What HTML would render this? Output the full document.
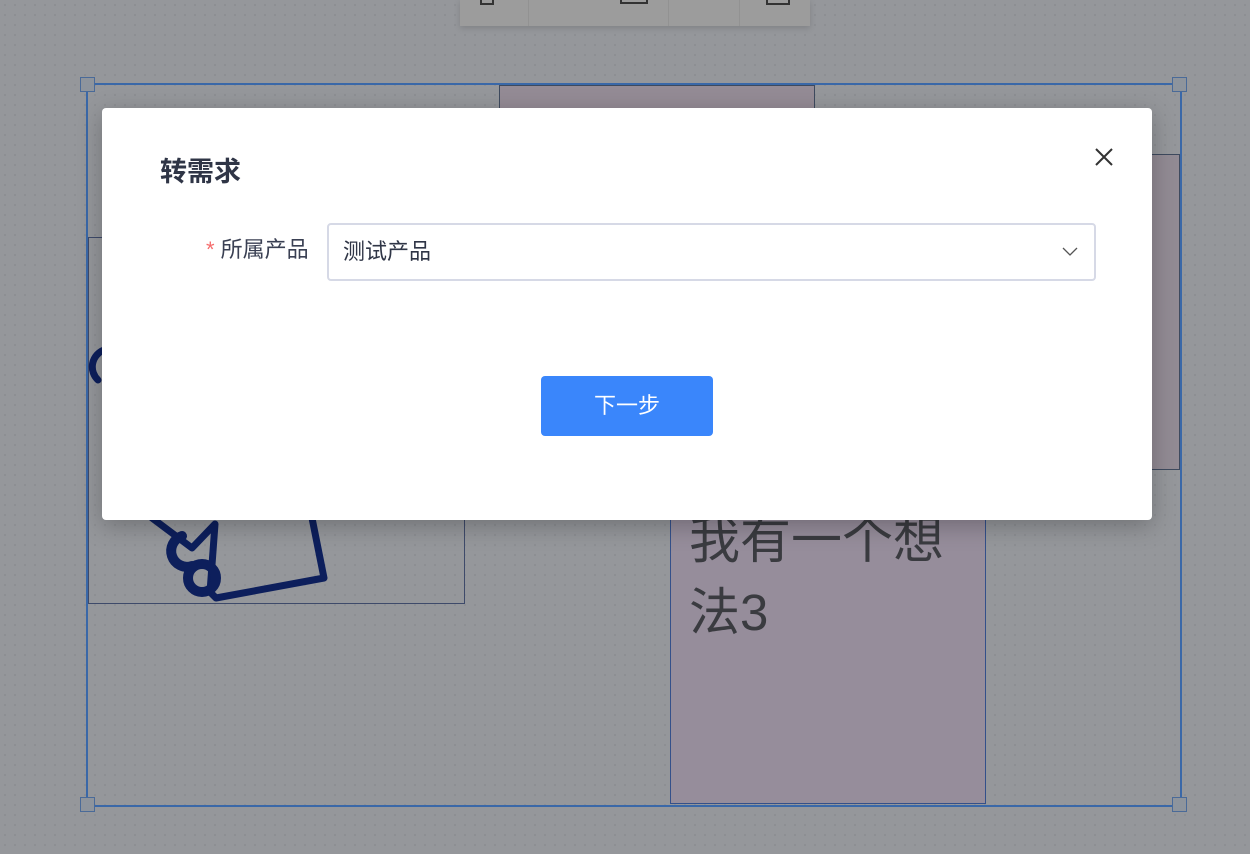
<!DOCTYPE html>
<html><head><meta charset="utf-8"><style>
*{margin:0;padding:0;box-sizing:border-box}
body{width:1250px;height:854px;overflow:hidden;position:relative;background-color:#95979b;background-image:radial-gradient(#8a8c90 0.8px,transparent 1px);background-size:10px 10px;font-family:"Liberation Sans","Noto Sans CJK SC",sans-serif}
.abs{position:absolute}
</style></head><body>
<div class="abs" style="left:460px;top:0;width:350px;height:26px;background:#9c9c9c;box-shadow:0 2px 6px rgba(0,0,0,.15)">
<div class="abs" style="left:68px;top:0;width:1px;height:26px;background:#929292"></div>
<div class="abs" style="left:208px;top:0;width:1px;height:26px;background:#929292"></div>
<div class="abs" style="left:279px;top:0;width:1px;height:26px;background:#929292"></div>
<div class="abs" style="left:20px;top:0;width:14px;height:5px;border:2px solid #333;border-top:none"></div>
<div class="abs" style="left:160px;top:0;width:28px;height:4px;border:2px solid #333;border-top:none"></div>
<div class="abs" style="left:306px;top:0;width:24px;height:5px;border:2px solid #333;border-top:none"></div>
</div>
<div class="abs" style="left:499px;top:85px;width:316px;height:30px;background:#948b95;border:1px solid #3e4a5e"></div>
<div class="abs" style="left:1140px;top:154px;width:40px;height:316px;background:#928b94;border:1px solid #3e4a5e"></div>
<div class="abs" style="left:88px;top:237px;width:377px;height:367px;border:1px solid #3e4a6a"></div>
<svg class="abs" style="left:80px;top:330px" width="400" height="290" viewBox="0 0 400 290">
<g fill="none" stroke="#0d1f5c" stroke-width="7" stroke-linecap="round" stroke-linejoin="round">
<path d="M24 20 A18 18 0 0 0 18 50"/>
<path d="M72 188 L112 218 L135 194 L130 262 L136 268 L244 248 L232 188"/>
<circle cx="122" cy="248" r="14" stroke-width="10"/>
<path d="M102 206 A12 12 0 0 0 112 236" stroke-width="10"/>
</g></svg>
<div class="abs" style="left:670px;top:470px;width:316px;height:334px;background:#968d9b;border:1px solid #34508a;color:#3a3b40;font-size:51px;line-height:72px;padding:34px 0 0 18px">我有一个想<br>法3</div>
<div class="abs" style="left:86px;top:83px;width:1096px;height:724px;border:2px solid #3a68a8"></div>
<div class="abs" style="left:80px;top:77px;width:15px;height:15px;background:#8e949c;border:1px solid #4a6a98"></div>
<div class="abs" style="left:1172px;top:77px;width:15px;height:15px;background:#8e949c;border:1px solid #4a6a98"></div>
<div class="abs" style="left:80px;top:797px;width:15px;height:15px;background:#8e949c;border:1px solid #4a6a98"></div>
<div class="abs" style="left:1172px;top:797px;width:15px;height:15px;background:#8e949c;border:1px solid #4a6a98"></div>
<div class="abs" style="left:102px;top:108px;width:1050px;height:412px;background:#fff;border-radius:4px;box-shadow:0 6px 24px rgba(0,0,0,.25)">
<div class="abs" style="left:58px;top:48px;font-size:27px;font-weight:bold;color:#2f3546;line-height:32px">转需求</div>
<svg class="abs" style="left:992px;top:39px" width="20" height="20" viewBox="0 0 20 20"><path d="M2 2L18 18M18 2L2 18" stroke="#333" stroke-width="2"/></svg>
<div class="abs" style="left:104px;top:127px;font-size:22px;color:#3a4053;line-height:30px"><span style="color:#f56c6c">*</span> 所属产品</div>
<div class="abs" style="left:225px;top:115px;width:769px;height:58px;border:2px solid #d6d9e6;border-radius:4px;font-size:22px;color:#2f3546;line-height:54px;padding-left:14px">测试产品
<svg class="abs" style="right:16px;top:22px" width="16" height="10" viewBox="0 0 16 10"><path d="M1 1L8 8L15 1" fill="none" stroke="#555" stroke-width="1.3"/></svg></div>
<div class="abs" style="left:439px;top:268px;width:172px;height:60px;background:#3a86fb;border-radius:4px;color:#fff;font-size:22px;line-height:60px;text-align:center">下一步</div>
</div>
</body></html>
